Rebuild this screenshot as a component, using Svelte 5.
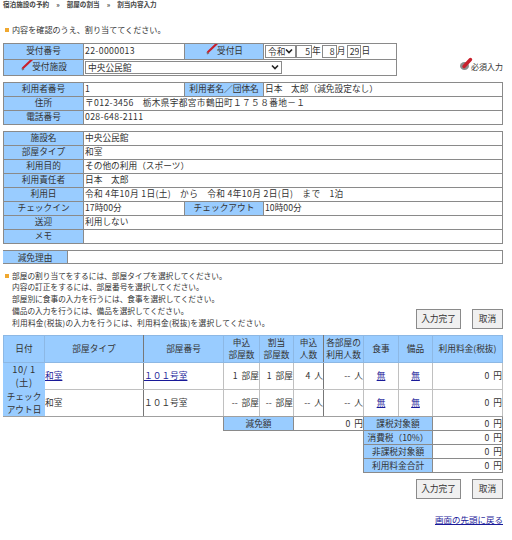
<script>
  const notes = [
    '部屋の割り当てをするには、部屋タイプを選択してください。',
    '内容の訂正をするには、部屋番号を選択してください。',
    '部屋別に食事の入力を行うには、食事を選択してください。',
    '備品の入力を行うには、備品を選択してください。',
    '利用料金(税抜)の入力を行うには、利用料金(税抜)を選択してください。'
  ];

  const totals = [
    ['消費税（10%）', '0 円'],
    ['非課税対象額', '0 円'],
    ['利用料金合計', '0 円']
  ];
</script>

{#snippet pencil(big = false)}
  <svg class="pencil" viewBox="0 0 14 14" width="14" height="14" aria-hidden="true">
    {#if big}
      <ellipse cx="5.5" cy="9" rx="4.5" ry="4" fill="#8c8c8c" />
      <path d="M5 9.5 L11.5 2.5" stroke="#c8202c" stroke-width="3.4" stroke-linecap="round" />
    {:else}
      <path d="M3 11 L12 2.5" stroke="#c8202c" stroke-width="2.2" stroke-linecap="round" />
      <path d="M1.5 11 L4.5 12.5 L2 13.5 Z" fill="#777" />
    {/if}
  </svg>
{/snippet}

<div class="page">
  <div class="crumbs"><span>宿泊施設の予約</span><span>»</span><span>部屋の割当</span><span>»</span><span>割当内容入力</span></div>
  <p class="note first"><i class="mark"></i>内容を確認のうえ、割り当ててください。</p>

  <div class="top">
    <table class="form accept">
      <colgroup><col class="c1" /><col class="c2" /><col class="c3" /><col /></colgroup>
      <tbody>
        <tr>
          <th>受付番号</th>
          <td class="wide">22-0000013</td>
          <th>{@render pencil()}受付日</th>
          <td class="date">
            <select class="era"><option>令和</option></select><input class="n1" value="5" />年<input class="n2" value="8" />月<input class="n3" value="29" />日
          </td>
        </tr>
        <tr>
          <th>{@render pencil()}受付施設</th>
          <td colspan="3"><select class="facility"><option>中央公民館</option></select></td>
        </tr>
      </tbody>
    </table>
    <div class="required">{@render pencil(true)}必須入力</div>
  </div>

  <table class="form">
    <colgroup><col class="c1" /><col class="c2" /><col class="c3" /><col /></colgroup>
    <tbody>
      <tr><th>利用者番号</th><td>1</td><th>利用者名／団体名</th><td>日本　太郎（減免設定なし）</td></tr>
      <tr><th>住所</th><td class="wide" colspan="3">〒012-3456　栃木県宇都宮市鶴田町１７５８番地－１</td></tr>
      <tr><th>電話番号</th><td class="wide" colspan="3">028-648-2111</td></tr>
    </tbody>
  </table>

  <table class="form">
    <colgroup><col class="c1" /><col class="c2" /><col class="c3" /><col /></colgroup>
    <tbody>
      <tr><th>施設名</th><td colspan="3">中央公民館</td></tr>
      <tr><th>部屋タイプ</th><td colspan="3">和室</td></tr>
      <tr><th>利用目的</th><td colspan="3">その他の利用（スポーツ）</td></tr>
      <tr><th>利用責任者</th><td colspan="3">日本　太郎</td></tr>
      <tr><th>利用日</th><td class="wide" colspan="3">令和 4年10月 1日(土)　から　令和 4年10月 2日(日)　まで　1泊</td></tr>
      <tr><th>チェックイン</th><td>17時00分</td><th>チェックアウト</th><td>10時00分</td></tr>
      <tr><th>送迎</th><td colspan="3">利用しない</td></tr>
      <tr><th>メモ</th><td colspan="3"></td></tr>
    </tbody>
  </table>

  <div class="reason">
    <span>減免理由</span>
    <input />
  </div>

  <div class="guide">
    <div class="lines">
      {#each notes as line, i}
        <p class="note" class:long={i === 4}>{#if i === 0}<i class="mark"></i>{/if}{line}</p>
      {/each}
    </div>
    <div class="actions">
      <button>入力完了</button>
      <button>取消</button>
    </div>
  </div>

  <table class="rooms">
    <colgroup>
      <col style="width:41px" /><col style="width:99px" /><col style="width:80px" /><col style="width:36px" /><col style="width:34px" />
      <col style="width:30px" /><col style="width:40px" /><col style="width:35px" /><col style="width:34px" /><col />
    </colgroup>
    <thead>
      <tr>
        <th>日付</th><th>部屋タイプ</th><th>部屋番号</th><th>申込<br />部屋数</th><th>割当<br />部屋数</th>
        <th>申込<br />人数</th><th>各部屋の<br />利用人数</th><th>食事</th><th>備品</th><th>利用料金(税抜)</th>
      </tr>
    </thead>
    <tbody>
      <tr class="tall">
        <th class="day">10/ 1<br />(土)</th>
        <td><a href="#top">和室</a></td>
        <td><a href="#top">１０１号室</a></td>
        <td class="r">1 部屋</td><td class="r">1 部屋</td><td class="r">4 人</td><td class="r">-- 人</td>
        <td class="c"><a href="#top">無</a></td><td class="c"><a href="#top">無</a></td>
        <td class="r">0 円</td>
      </tr>
      <tr class="tall">
        <th>チェック<br />アウト日</th>
        <td>和室</td>
        <td>１０１号室</td>
        <td class="r">-- 部屋</td><td class="r">-- 部屋</td><td class="r">-- 人</td><td class="r">-- 人</td>
        <td class="c"><a href="#top">無</a></td><td class="c"><a href="#top">無</a></td>
        <td class="r">0 円</td>
      </tr>
      <tr>
        <td class="blank" colspan="3"></td>
        <th colspan="2">減免額</th>
        <td class="r" colspan="2">0 円</td>
        <th colspan="2">課税対象額</th>
        <td class="r">0 円</td>
      </tr>
      {#each totals as [label, amount]}
        <tr>
          <td class="blank" colspan="7"></td>
          <th colspan="2">{label}</th>
          <td class="r">{amount}</td>
        </tr>
      {/each}
    </tbody>
  </table>

  <div class="actions bottom">
    <button>入力完了</button>
    <button>取消</button>
  </div>

  <div class="back"><a href="#top">画面の先頭に戻る</a></div>
</div>

<style>
  :global(body) {
    margin: 0;
    background: #fff;
  }

  .page {
    width: 500px;
    padding: 0 6px 0 3px;
    font-family: "Noto Sans CJK JP", "Noto Sans", sans-serif;
    font-size: 8.7px;
    color: #333;
    line-height: 12px;
  }

  .crumbs {
    display: flex;
    gap: 7px;
    font-size: 6.6px;
    font-weight: 700;
    line-height: 9px;
    color: #444;
  }

  .note {
    margin: 0;
    padding-left: 9px;
    position: relative;
    line-height: 11.7px;
    font-size: 7.7px;
  }

  .note.long {
    letter-spacing: .27px;
  }

  .note.first {
    margin: 15px 0 7px;
    font-size: 8.1px;
  }

  .mark {
    position: absolute;
    left: 2px;
    top: 4px;
    width: 4px;
    height: 4px;
    background: #f0a830;
  }

  table {
    border-collapse: collapse;
    table-layout: fixed;
    width: 500px;
    margin-bottom: 6px;
  }

  .c1 { width: 80px; }
  .c2 { width: 101px; }
  .c3 { width: 79px; }

  th,
  td {
    border: 1px solid #8a8a8a;
    padding: 0 1px;
    height: 13px;
    font-weight: 400;
    white-space: nowrap;
    overflow: hidden;
  }

  th {
    background: #99ccff;
    text-align: center;
  }

  .wide {
    letter-spacing: .35px;
  }

  .top {
    display: flex;
    align-items: flex-end;
    justify-content: space-between;
  }

  .accept {
    width: 394px;
    margin-bottom: 6px;
  }

  .accept th,
  .accept td {
    height: 15px;
  }

  .pencil {
    vertical-align: -1px;
    margin-right: -2px;
    margin-top: -4px;
  }

  select,
  input {
    font: inherit;
    color: inherit;
    box-sizing: border-box;
    height: 13px;
    margin: 0;
    border: 1px solid #8a8a8a;
    background: #fff;
    border-radius: 0;
    vertical-align: top;
  }

  select {
    appearance: none;
    padding: 0 0 0 2px;
    background: #fff url("data:image/svg+xml,%3Csvg xmlns='http://www.w3.org/2000/svg' width='8' height='6'%3E%3Cpath d='M1 1.5 4 4.5 7 1.5' fill='none' stroke='%23222' stroke-width='1.6'/%3E%3C/svg%3E") no-repeat right 2px center;
  }

  .date input {
    text-align: right;
    padding: 0 1px;
  }

  .era { width: 31px; }
  .n1 { width: 16px; }
  .n2 { width: 15px; margin-left: 1px; }
  .n3 { width: 14px; margin-left: 2px; }
  .facility { width: 197px; }

  .required {
    margin-bottom: 9px;
    font-size: 8px;
    white-space: nowrap;
  }

  .reason {
    display: flex;
    height: 14px;
    box-sizing: border-box;
    margin-top: 1px;
    border: 1px solid #8a8a8a;
    border-left: 0;
  }

  .reason span {
    width: 64px;
    background: #99ccff;
    text-align: center;
    line-height: 13px;
  }

  .reason input {
    flex: 1;
    height: 12px;
    border-width: 0 0 0 1px;
  }

  .guide {
    display: flex;
    justify-content: space-between;
    align-items: flex-end;
    margin-top: 6px;
    margin-bottom: 6px;
  }

  .lines {
    padding-bottom: 1px;
  }

  .actions {
    display: flex;
    gap: 11px;
    justify-content: flex-end;
  }

  button {
    height: 20px;
    padding: 0;
    width: 45px;
    border: 1px solid #8a8a8a;
    background: #f0f0f0;
    font: inherit;
    color: inherit;
  }

  button + button {
    width: 31px;
  }

  .rooms {
    margin-bottom: 6px;
  }

  .rooms thead th {
    height: 26px;
    line-height: 12px;
    padding: 0;
    border-color: #8db8e4;
  }

  .rooms thead th:nth-child(2),
  .rooms thead th:nth-child(6),
  .rooms .tall td:nth-child(2),
  .rooms .tall td:nth-child(6) {
    border-right-color: #777;
  }

  .rooms .tall th,
  .rooms .tall td {
    height: 26px;
    border-color: #c0c0c0;
    padding: 0;
  }

  .rooms .tall th {
    border-color: #99ccff;
    line-height: 13px;
  }

  .rooms .tall:nth-child(2) td,
  .rooms .tall:nth-child(2) th {
    border-bottom-color: #a0a0a0;
  }

  .rooms .day {
    font-size: 9.4px;
    letter-spacing: .4px;
  }

  .rooms .r {
    text-align: right;
    padding-right: 0;
    word-spacing: 2px;
  }

  .rooms .c {
    text-align: center;
  }

  .rooms .blank {
    border: 0;
  }

  a {
    color: #1a1a99;
    text-decoration: underline;
  }

  .bottom {
    margin-bottom: 14px;
  }

  .back {
    text-align: right;
    font-size: 8.5px;
  }
</style>
